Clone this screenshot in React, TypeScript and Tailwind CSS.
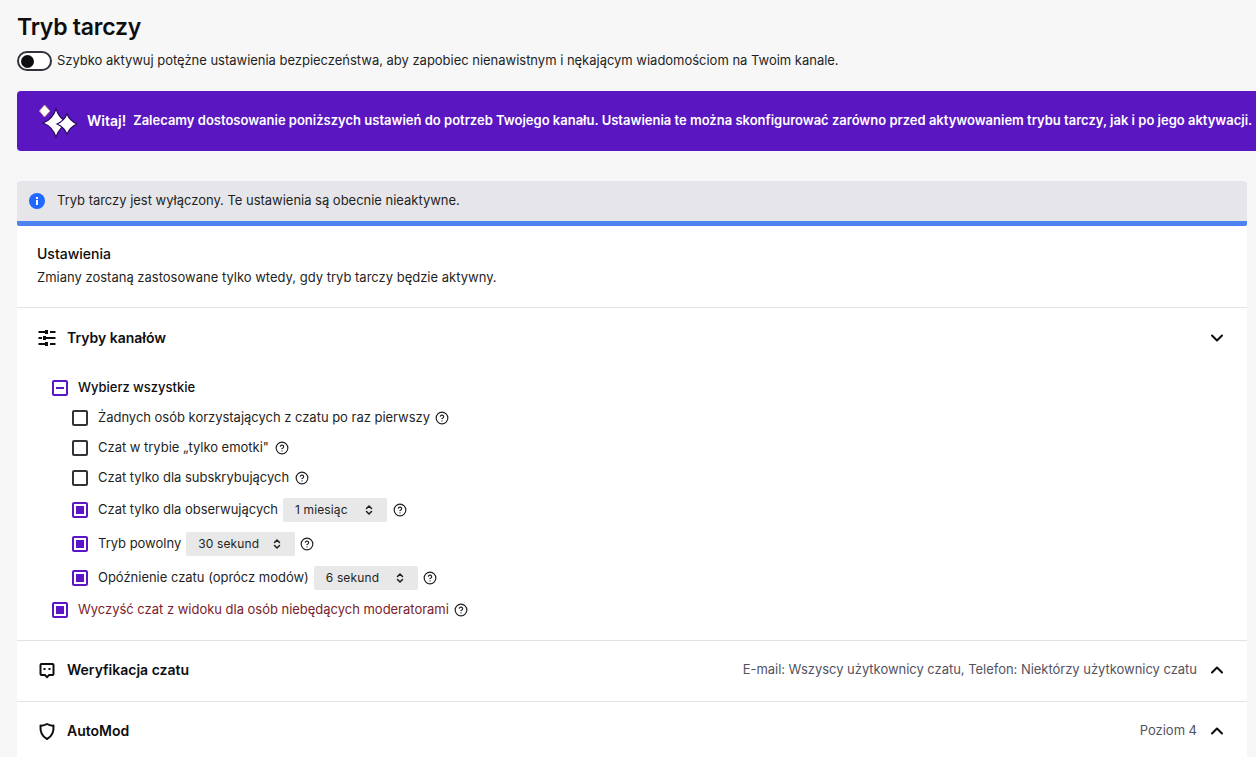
import { ChevronDown, ChevronUp, ChevronsUpDown, CircleHelp } from "lucide-react"

function Help({ className = "" }: { className?: string }) {
  return <CircleHelp className={"w-[14px] h-[14px] shrink-0 text-[#1f1f23] " + className} strokeWidth={2} />
}

function Box({ state }: { state: "empty" | "checked" | "mixed" }) {
  if (state === "empty") {
    return <span className="w-4 h-4 shrink-0 rounded-[2px] border-2 border-[#323239] bg-white" />
  }
  return (
    <span className="w-4 h-4 shrink-0 rounded-[2px] border-2 border-[#5c16c5] bg-white flex items-center justify-center">
      {state === "checked" ? (
        <span className="w-2 h-2 bg-[#5c16c5]" />
      ) : (
        <span className="w-2 h-0.5 bg-[#5c16c5]" />
      )}
    </span>
  )
}

function Picker({ label, width }: { label: string; width: string }) {
  return (
    <div className={"h-6 rounded-[2px] bg-[#e8e8e8] pl-3 pr-3 flex items-center justify-between text-xs tracking-[0.13px] text-[#1f1f23] " + width}>
      <span>{label}</span>
      <ChevronsUpDown className="w-3 h-3 text-[#1f1f23]" strokeWidth={3} />
    </div>
  )
}

function SectionRow({ icon, title, value }: { icon: React.ReactNode; title: string; value: string }) {
  return (
    <div className="flex items-center h-[60px] pl-5 pr-5 pb-[2px]">
      <div className="w-5 h-5 mr-[10px] flex items-center justify-center">{icon}</div>
      <div className="font-semibold text-sm text-[#0e0e10]">{title}</div>
      <div className="ml-auto text-[13px] tracking-[-0.03px] text-[#53535f]">{value}</div>
      <ChevronUp className="ml-[10px] w-5 h-5 text-[#0e0e10]" strokeWidth={2.5} />
    </div>
  )
}

export default function App() {
  return (
    <div className="w-[1256px] h-[757px] overflow-hidden bg-[#f7f7f8] pl-[17px] pr-[9px] font-['Inter',sans-serif] text-[#1f1f23]">
      <h1 className="pt-[12px] h-[44px] text-[23px] tracking-[-0.25px] leading-[30px] font-semibold text-[#0e0e10]">Tryb tarczy</h1>

      <div className="mt-[-1px] h-[36px] flex items-center text-[13px] tracking-[-0.02px]">
        <div className="w-[35px] h-[20px] rounded-full border-2 border-[#323239] bg-white flex items-center pl-[2px] mr-[5px]">
          <span className="w-[13px] h-[13px] rounded-full bg-[#0e0e10]" />
        </div>
        <span>
          Szybko aktywuj potężne ustawienia bezpieczeństwa, aby zapobiec nienawistnym i nękającym wiadomościom na Twoim kanale.
        </span>
      </div>

      {/* Baner powitalny wychodzi poza prawą krawędź okna */}
      <div className="mt-[12px] h-[60px] w-[1260px] rounded-[4px] bg-[#5a16c0] flex items-center pl-[22px] text-white font-semibold text-[13px] whitespace-nowrap">
        <svg className="w-[38px] h-[36px] mr-[10px] shrink-0" viewBox="0 0 38 36">
          <path d="M5.5 2 L11 8 L5.5 14 L0.5 8 Z" fill="white" stroke="#c9a98a" strokeWidth="1" />
          <path d="M17 6 Q20.5 16.5 30 20 Q20.5 23.5 17 34 Q13.5 23.500 4 20 Q13.5 16.5 17 6 Z" fill="white" stroke="#2a0a5e" strokeWidth="1.2" />
          <path d="M28 11 Q31 18 38 21 Q31 24 28 31 Q25 24 18 21 Q25 18 28 11 Z" fill="white" stroke="#2a0a5e" strokeWidth="1.2" />
        </svg>
        <span className="text-sm mr-[7px]">Witaj!</span>
        <span>Zalecamy dostosowanie poniższych ustawień do potrzeb Twojego kanału. Ustawienia te można skonfigurować zarówno przed aktywowaniem trybu tarczy, jak i po jego aktywacji.</span>
      </div>

      <div className="mt-[30px] h-[45px] rounded-t-[4px] rounded-b-[2px] bg-[#e6e6ea] border-b-[5px] border-[#4d83f0] flex items-center pl-3 text-[13px] tracking-[-0.02px]">
        <span className="w-4 h-4 rounded-full bg-[#1f69ff] text-white flex items-center justify-center mr-3 shrink-0">
          <svg className="w-4 h-4" viewBox="0 0 16 16">
            <rect x="7" y="7" width="2" height="5" fill="white" />
            <rect x="7" y="4" width="2" height="2" fill="white" />
          </svg>
        </span>
        Tryb tarczy jest wyłączony. Te ustawienia są obecnie nieaktywne.
      </div>

      <div className="bg-white">
        <div className="h-[82px] pl-5 pt-[19px] border-b border-[#e3e3e6]">
          <div className="text-sm leading-[18px] font-medium text-[#0e0e10]">Ustawienia</div>
          <div className="mt-[5px] text-[13px] leading-[18px]">Zmiany zostaną zastosowane tylko wtedy, gdy tryb tarczy będzie aktywny.</div>
        </div>

        <div className="h-[333px] border-b border-[#e3e3e6]">
          <div className="flex items-center h-[60px] pl-5 pr-5">
            <svg className="w-5 h-5 mr-[10px] text-[#0e0e10]" viewBox="0 0 20 20" fill="currentColor">
              <rect x="1.500" y="3" width="8" height="2" />
              <rect x="8" y="2" width="3" height="4" />
              <rect x="13" y="3" width="5.500" height="2" />
              <rect x="1.500" y="9" width="3.500" height="2" />
              <rect x="6" y="8" width="3" height="4" />
              <rect x="9" y="9" width="9.500" height="2" />
              <rect x="1.500" y="15" width="8" height="2" />
              <rect x="8" y="14" width="3" height="4" />
              <rect x="13" y="15" width="5.500" height="2" />
            </svg>
            <div className="font-semibold text-sm text-[#0e0e10]">Tryby kanałów</div>
            <ChevronDown className="ml-auto w-5 h-5 text-[#0e0e10]" strokeWidth={2.5} />
          </div>

          <div className="pl-[35px] pt-[10px] text-[13px] tracking-[-0.02px]">
            <div className="h-[19px] flex items-center gap-[10px]">
              <Box state="mixed" />
              <span className="font-medium text-[#0e0e10]">Wybierz wszystkie</span>
            </div>

            <div className="pl-[20px] pt-[6px] flex flex-col">
              <div className="h-[30px] flex items-center gap-[10px]">
                <Box state="empty" />
                <span>Żadnych osób korzystających z czatu po raz pierwszy</span>
                <Help className="-ml-[5px]" />
              </div>
              <div className="h-[30px] flex items-center gap-[10px]">
                <Box state="empty" />
                <span>Czat w trybie „tylko emotki"</span>
                <Help className="-ml-[4px]" />
              </div>
              <div className="h-[30px] flex items-center gap-[10px]">
                <Box state="empty" />
                <span>Czat tylko dla subskrybujących</span>
                <Help className="-ml-[4px]" />
              </div>
              <div className="h-[34px] flex items-center gap-[10px]">
                <Box state="checked" />
                <span className="-mr-[5px]">Czat tylko dla obserwujących</span>
                <Picker label="1 miesiąc" width="w-[104px]" />
                <Help className="-ml-[4px]" />
              </div>
              <div className="h-[34px] flex items-center gap-[10px]">
                <Box state="checked" />
                <span className="-mr-[5px]">Tryb powolny</span>
                <Picker label="30 sekund" width="w-[109px]" />
                <Help className="-ml-[5px]" />
              </div>
              <div className="h-[34px] flex items-center gap-[10px]">
                <Box state="checked" />
                <span className="-mr-[5px]">Opóźnienie czatu (oprócz modów)</span>
                <Picker label="6 sekund" width="w-[104px]" />
                <Help className="-ml-[5px]" />
              </div>
            </div>

            <div className="h-[30px] flex items-center gap-[10px]">
              <Box state="checked" />
              <span className="text-[#7a1c2b]">Wyczyść czat z widoku dla osób niebędących moderatorami</span>
              <Help className="-ml-[5px]" />
            </div>
          </div>
        </div>

        <div className="border-b border-[#e3e3e6]">
          <SectionRow
            title="Weryfikacja czatu"
            value="E-mail: Wszyscy użytkownicy czatu, Telefon: Niektórzy użytkownicy czatu"
            icon={
              <svg className="w-5 h-5 text-[#0e0e10]" viewBox="0 0 20 20" fill="currentColor">
                <path fillRule="evenodd" d="M4.5 3h11a2 2 0 0 1 2 2v9a2 2 0 0 1-2 2H12.500l-2.500 2.500L7.500 16h-3a2 2 0 0 1-2-2V5a2 2 0 0 1 2-2zm0 2v9h3.800l1.700 1.700 1.700-1.700h3.800V5h-11z" />
                <rect x="6.500" y="8" width="2" height="2" />
                <rect x="11.500" y="8" width="2" height="2" />
              </svg>
            }
          />
        </div>
        <SectionRow
          title="AutoMod"
          value="Poziom 4"
          icon={
            <svg className="w-5 h-5 text-[#0e0e10]" viewBox="0 0 20 20" fill="none" stroke="currentColor" strokeWidth="2">
              <path d="M10 3 C12 4.300 14 4.800 16.500 4.600 C17 11 15 15.500 10 18 C5 15.500 3 11 3.500 4.600 C6 4.800 8 4.300 10 3 Z" strokeLinejoin="round" />
            </svg>
          }
        />
      </div>
    </div>
  )
}
